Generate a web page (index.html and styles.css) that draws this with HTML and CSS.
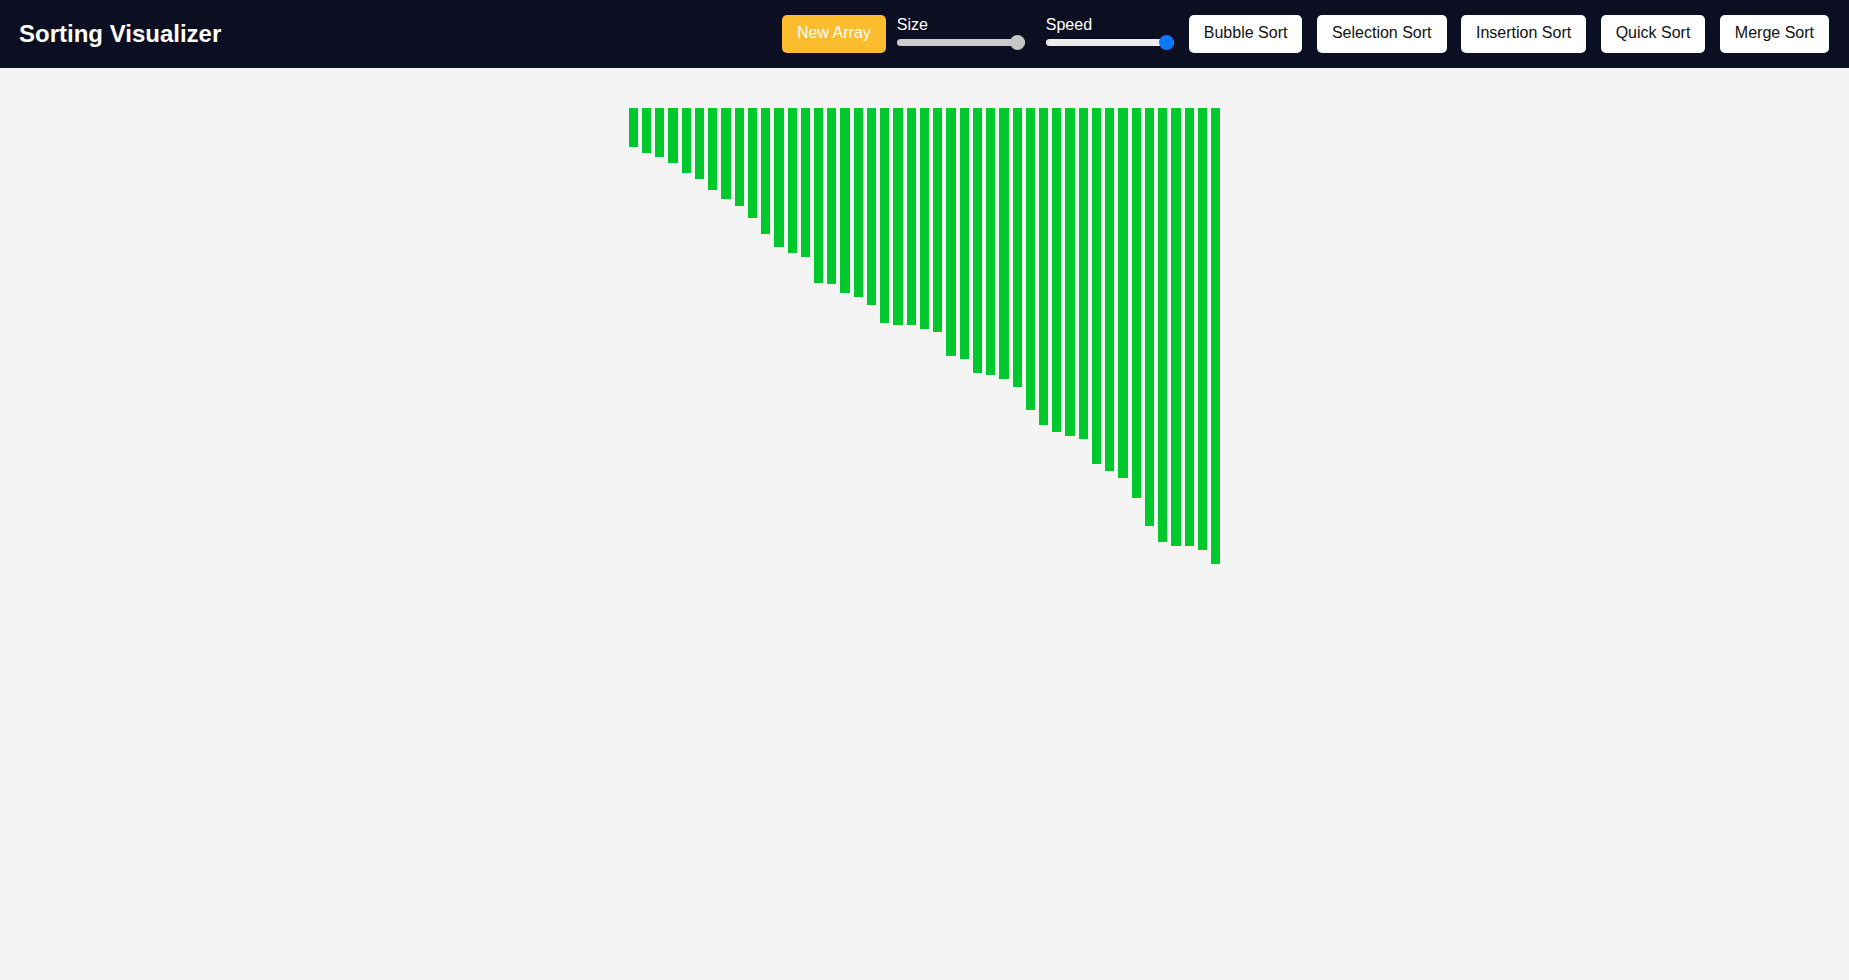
FILE: index.html
```html
<!DOCTYPE html>
<html lang="en">
<head>
<meta charset="utf-8">
<title>Sorting Visualizer</title>
<link rel="stylesheet" href="styles.css">
</head>
<body>
<header class="header">
  <h1 class="title">Sorting Visualizer</h1>
  <div class="controls">
    <button class="btn btn-new">New Array</button>
    <div class="slider-group group-size">
      <label class="slider-label">Size</label>
      <input class="slider slider-size" type="range" min="5" max="45" value="45">
    </div>
    <div class="slider-group group-speed">
      <label class="slider-label">Speed</label>
      <input class="slider slider-speed" type="range" min="1" max="100" value="100">
    </div>
    <button class="btn btn-sort first-sort">Bubble Sort</button>
    <button class="btn btn-sort">Selection Sort</button>
    <button class="btn btn-sort">Insertion Sort</button>
    <button class="btn btn-sort">Quick Sort</button>
    <button class="btn btn-sort">Merge Sort</button>
  </div>
</header>
<main class="board">
  <div class="bars">
    <div class="bar" style="height:39px"></div>
    <div class="bar" style="height:45px"></div>
    <div class="bar" style="height:49px"></div>
    <div class="bar" style="height:55px"></div>
    <div class="bar" style="height:65px"></div>
    <div class="bar" style="height:71px"></div>
    <div class="bar" style="height:82px"></div>
    <div class="bar" style="height:91px"></div>
    <div class="bar" style="height:98px"></div>
    <div class="bar" style="height:110px"></div>
    <div class="bar" style="height:126px"></div>
    <div class="bar" style="height:139px"></div>
    <div class="bar" style="height:145px"></div>
    <div class="bar" style="height:149px"></div>
    <div class="bar" style="height:175px"></div>
    <div class="bar" style="height:176px"></div>
    <div class="bar" style="height:185px"></div>
    <div class="bar" style="height:189px"></div>
    <div class="bar" style="height:197px"></div>
    <div class="bar" style="height:215px"></div>
    <div class="bar" style="height:217px"></div>
    <div class="bar" style="height:217px"></div>
    <div class="bar" style="height:221px"></div>
    <div class="bar" style="height:224px"></div>
    <div class="bar" style="height:248px"></div>
    <div class="bar" style="height:251px"></div>
    <div class="bar" style="height:265px"></div>
    <div class="bar" style="height:267px"></div>
    <div class="bar" style="height:271px"></div>
    <div class="bar" style="height:279px"></div>
    <div class="bar" style="height:302px"></div>
    <div class="bar" style="height:317px"></div>
    <div class="bar" style="height:324px"></div>
    <div class="bar" style="height:328px"></div>
    <div class="bar" style="height:331px"></div>
    <div class="bar" style="height:356px"></div>
    <div class="bar" style="height:363px"></div>
    <div class="bar" style="height:370px"></div>
    <div class="bar" style="height:390px"></div>
    <div class="bar" style="height:418px"></div>
    <div class="bar" style="height:434px"></div>
    <div class="bar" style="height:438px"></div>
    <div class="bar" style="height:438px"></div>
    <div class="bar" style="height:442px"></div>
    <div class="bar" style="height:456px"></div>
  </div>
</main>
</body>
</html>
```

FILE: styles.css
```css
* {
  box-sizing: border-box;
}

html, body {
  margin: 0;
  padding: 0;
}

body {
  background: #f4f4f4;
  font-family: "Liberation Sans", Arial, sans-serif;
  min-height: 980px;
}

.header {
  height: 68px;
  background: #0c0f22;
  display: flex;
  align-items: center;
  justify-content: space-between;
  padding: 0 20px 0 19px;
}

.title {
  margin: -2px 0 0 0;
  color: #ffffff;
  font-size: 24px;
  font-weight: bold;
  line-height: 27px;
}

.controls {
  display: flex;
  align-items: center;
}

.btn {
  font-family: "Liberation Sans", Arial, sans-serif;
  font-size: 16px;
  line-height: 18px;
  height: 38px;
  padding: 9px 15px 11px 15px;
  border: none;
  border-radius: 5px;
  cursor: pointer;
}

.btn-new {
  background: #fbbc2d;
  color: #ffffff;
}

.btn-sort {
  background: #ffffff;
  color: #111111;
  margin-left: 14.5px;
}

.first-sort {
  margin-left: 15px;
}

.slider-group {
  display: flex;
  flex-direction: column;
  align-items: flex-start;
  height: 36px;
  padding-bottom: 6px;
}

.group-size {
  margin-left: 11px;
}

.group-speed {
  margin-left: 21px;
}

.slider-label {
  color: #ffffff;
  font-size: 16px;
  line-height: 18px;
}

.slider {
  -webkit-appearance: none;
  appearance: none;
  width: 128px;
  height: 7px;
  margin: 5px 0 0 0;
  border-radius: 4px;
  outline: none;
}

.slider-size {
  background: #cccccc;
}

.slider-speed {
  background: #ececec;
}

.slider::-webkit-slider-thumb {
  -webkit-appearance: none;
  appearance: none;
  width: 15px;
  height: 15px;
  border-radius: 50%;
  cursor: pointer;
}

.slider-size::-webkit-slider-thumb {
  background: #c6c6c6;
}

.slider-speed::-webkit-slider-thumb {
  background: #0a78ff;
}

.board {
  padding-top: 40px;
}

.bars {
  display: flex;
  justify-content: center;
  align-items: flex-start;
}

.bar {
  width: 9.24px;
  margin: 0 2px;
  background: #00c92d;
}
```
